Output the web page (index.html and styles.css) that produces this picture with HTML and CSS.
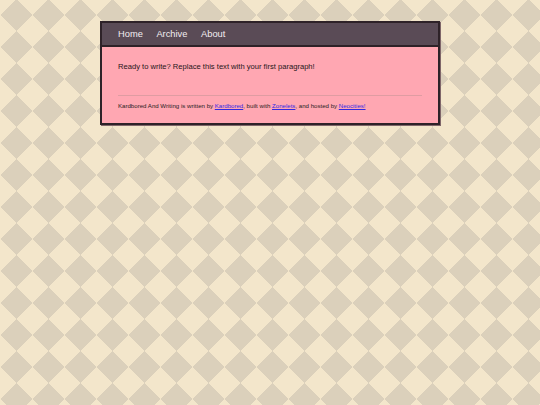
FILE: index.html
```html
<!DOCTYPE html>
<html>
<head>
<meta charset="utf-8">
<link rel="stylesheet" href="styles.css">
</head>
<body>
<div class="page">
  <nav class="nav">
    <a href="#">Home</a>
    <a href="#">Archive</a>
    <a href="#">About</a>
  </nav>
  <main class="content">
    <p class="lead">Ready to write? Replace this text with your first paragraph!</p>
    <hr class="rule">
    <footer class="foot">Kardbored And Writing is written by <a href="#">Kardbored</a>, built with <a href="#">Zonelets</a>, and hosted by <a href="#">Neocities!</a></footer>
  </main>
</div>
</body>
</html>
```
FILE: styles.css
```css
html, body {
  margin: 0;
  padding: 0;
}
body {
  width: 540px;
  height: 405px;
  overflow: hidden;
  font-family: "Liberation Sans", Arial, sans-serif;
  background-color: #dbd0bb;
  background-image:
    linear-gradient(135deg, #f3e6cb 25%, transparent 25%),
    linear-gradient(225deg, #f3e6cb 25%, transparent 25%),
    linear-gradient(315deg, #f3e6cb 25%, transparent 25%),
    linear-gradient(45deg, #f3e6cb 25%, transparent 25%);
  background-size: 32px 32px;
  background-position: 0 -1px;
}
.page {
  width: 336px;
  margin: 21px auto 0;
  border: 2px solid #2e2228;
  box-shadow: 1px 1px 0 #7f6669;
}
.nav {
  display: flex;
  align-items: center;
  box-sizing: border-box;
  height: 24px;
  padding-left: 16px;
  padding-bottom: 1px;
  background: #5a4b56;
  border-bottom: 2px solid #2e2228;
}
.nav a {
  color: #f3edf1;
  font-size: 9.3px;
  text-decoration: none;
  margin-right: 13.6px;
}
.content {
  background: #ffa7b2;
  padding: 15px 16px 13px;
}
.lead {
  margin: 0;
  font-size: 7.6px;
  line-height: 9px;
  color: #1f1619;
}
.rule {
  margin: 24px 0 0;
  border: 0;
  height: 1px;
  background: #df9ca2;
}
.foot {
  margin-top: 6px;
  font-size: 6.1px;
  line-height: 8px;
  color: #2a1d22;
}
.foot a {
  color: #3529e0;
}
```
